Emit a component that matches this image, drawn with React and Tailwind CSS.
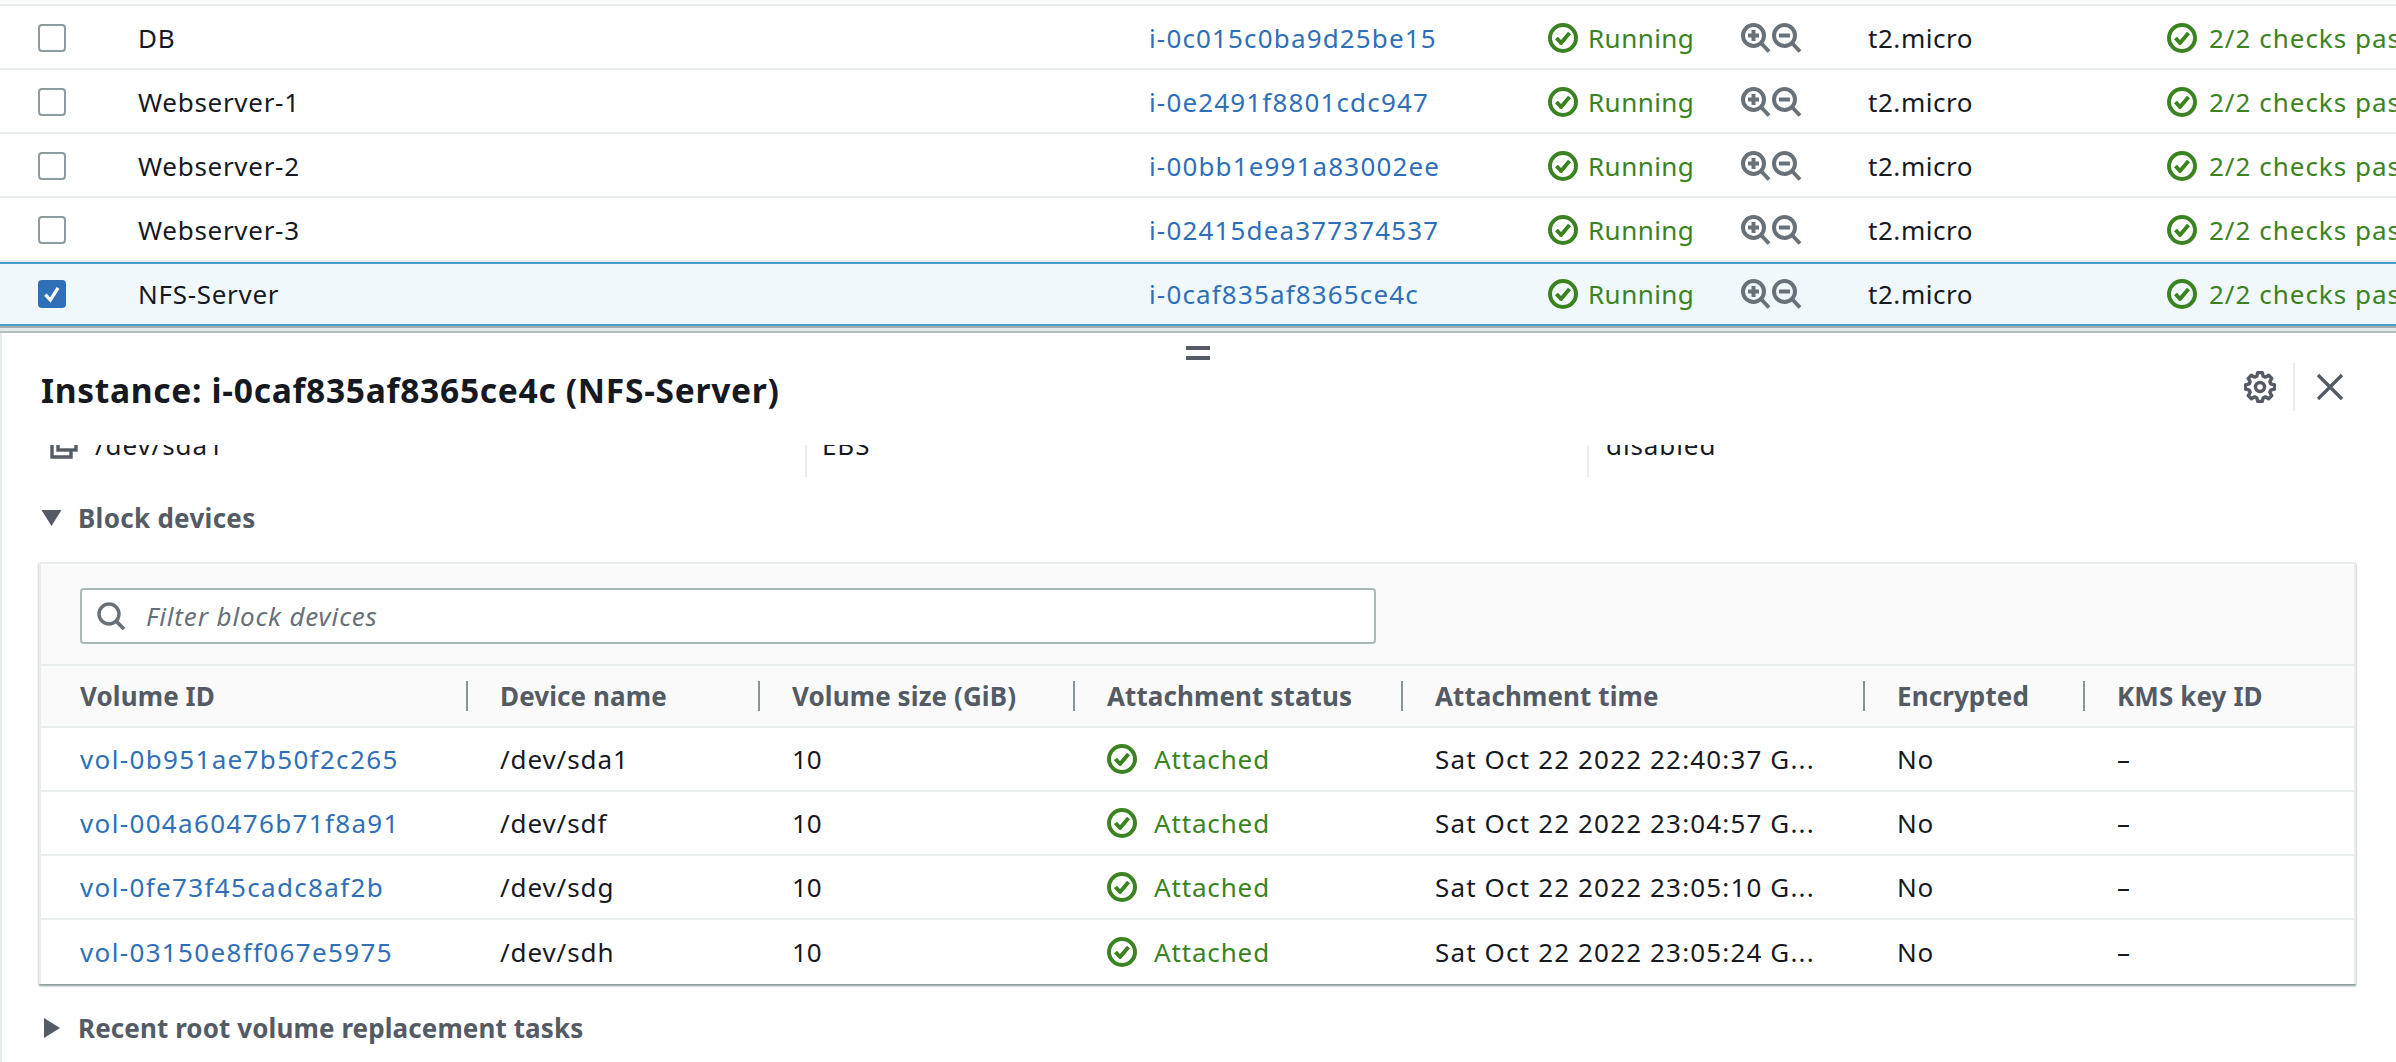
const font = { fontFamily: '"Noto Sans", sans-serif' };

const instances = [
  { name: "DB", id: "i-0c015c0ba9d25be15" },
  { name: "Webserver-1", id: "i-0e2491f8801cdc947" },
  { name: "Webserver-2", id: "i-00bb1e991a83002ee" },
  { name: "Webserver-3", id: "i-02415dea377374537" },
  { name: "NFS-Server", id: "i-0caf835af8365ce4c", selected: true },
];

const volumes = [
  { id: "vol-0b951ae7b50f2c265", device: "/dev/sda1", time: "Sat Oct 22 2022 22:40:37 G..." },
  { id: "vol-004a60476b71f8a91", device: "/dev/sdf", time: "Sat Oct 22 2022 23:04:57 G..." },
  { id: "vol-0fe73f45cadc8af2b", device: "/dev/sdg", time: "Sat Oct 22 2022 23:05:10 G..." },
  { id: "vol-03150e8ff067e5975", device: "/dev/sdh", time: "Sat Oct 22 2022 23:05:24 G..." },
];

const headers = [
  { label: "Volume ID", w: "w-[420px]" },
  { label: "Device name", w: "w-[292px]" },
  { label: "Volume size (GiB)", w: "w-[315px]" },
  { label: "Attachment status", w: "w-[328px]" },
  { label: "Attachment time", w: "w-[462px]" },
  { label: "Encrypted", w: "w-[220px]" },
  { label: "KMS key ID", w: "w-[190px]" },
];

// 8 toothed gear outline
function gearPath() {
  const pts = [];
  for (let i = 0; i < 8; i++) {
    const a = (i * Math.PI) / 4 - Math.PI / 2;
    const s = 0.2;
    pts.push([a - s * 1.45, 11.2], [a - s * 0.75, 14.6], [a + s * 0.75, 14.6], [a + s * 1.45, 11.2]);
  }
  return (
    pts
      .map(([a, r], i) => (i ? "L" : "M") + (16 + r * Math.cos(a)).toFixed(2) + " " + (16 + r * Math.sin(a)).toFixed(2))
      .join(" ") + "Z"
  );
}

function StatusIcon() {
  return (
    <svg viewBox="0 0 30 30" className="w-[30px] h-[30px] shrink-0" fill="none" stroke="#3b8321" strokeWidth="4">
      <circle cx="15" cy="15" r="13" />
      <path d="M8.5 15l4.500 5 8.500-10" strokeLinejoin="round" />
    </svg>
  );
}

function ZoomIcon({ plus }) {
  return (
    <svg viewBox="0 0 30 30" className="w-[30px] h-[30px]" fill="none" stroke="#687078" strokeWidth="4">
      <circle cx="12.5" cy="12.5" r="10.5" />
      <path d="M20 20l8 8.500" />
      <path d="M7 12.5h11" />
      {plus && <path d="M12.5 7v11" />}
    </svg>
  );
}

function InstanceRow({ row }) {
  return (
    <div
      className={
        "flex items-center h-[64px] whitespace-nowrap border-b-2 " +
        (row.selected ? "bg-[#f1f8fc] border-[#44a0c8] border-t-2" : "bg-white border-[#eaeded] pt-[2px]")
      }
    >
      <div className="w-[138px] pl-[38px] shrink-0">
        {row.selected ? (
          <div className="w-[28px] h-[28px] rounded-[4px] bg-[#2f6fb8] flex items-center justify-center">
            <svg viewBox="0 0 20 20" className="w-[22px] h-[22px]" fill="none" stroke="#fff" strokeWidth="3">
              <path d="M4 10.500l4.500 5L15.500 4.500" />
            </svg>
          </div>
        ) : (
          <div className="w-[28px] h-[28px] rounded-[4px] border-2 border-[#8f9b9f] bg-white" />
        )}
      </div>
      <div className="w-[1011px] shrink-0 text-[#16191f] tracking-[0.7px]">{row.name}</div>
      <div className="w-[399px] shrink-0 text-[#2f6fb8] tracking-[1.15px]">{row.id}</div>
      <div className="w-[193px] shrink-0 flex items-center gap-[10px] text-[#3b8321] tracking-[0.45px]">
        <StatusIcon />
        Running
      </div>
      <div className="w-[127px] shrink-0 flex items-center gap-[1px]">
        <ZoomIcon plus />
        <ZoomIcon />
      </div>
      <div className="w-[299px] shrink-0 text-[#16191f] tracking-[0.55px]">t2.micro</div>
      <div className="shrink-0 flex items-center gap-[12px] text-[#3b8321] tracking-[1px]">
        <StatusIcon />
        2/2 checks passed
      </div>
    </div>
  );
}

function VolumeRow({ row, last }) {
  return (
    <div className={"flex items-center h-[64px] whitespace-nowrap pl-[39px] " + (last ? "" : "border-b-2 border-[#eaeded]")}>
      <div className="w-[420px] shrink-0 text-[#2f6fb8] tracking-[1.35px]">{row.id}</div>
      <div className="w-[292px] shrink-0 text-[#16191f] tracking-[0.9px]">{row.device}</div>
      <div className="w-[315px] shrink-0 text-[#16191f]">10</div>
      <div className="w-[328px] shrink-0 flex items-center gap-[17px] text-[#3b8321] tracking-[0.85px]">
        <StatusIcon />
        Attached
      </div>
      <div className="w-[462px] shrink-0 text-[#16191f] tracking-[1.15px]">{row.time}</div>
      <div className="w-[220px] shrink-0 text-[#16191f] tracking-[0.8px]">No</div>
      <div className="text-[#16191f]">–</div>
    </div>
  );
}

export default function App() {
  return (
    <div style={font} className="w-[2396px] h-[1062px] overflow-hidden bg-white text-[26px]">
      {/* instances table */}
      <div className="h-[6px] bg-[#fafafa] border-b-2 border-[#eaeded]" />
      {instances.map((row) => (
        <InstanceRow key={row.id} row={row} />
      ))}
      <div className="h-[7px] bg-[#e4e8e8] border-t-2 border-b-2 border-t-[#a5adae] border-b-[#b5bcbc]" />

      {/* split panel */}
      <div className="border-l-2 border-[#eaeded] h-[729px]">
        <div className="flex justify-center h-[15px] pt-[13px] pr-[2px]">
          <div className="w-[24px] h-[14px] shrink-0 border-y-4 border-[#545b64]" />
        </div>
        <div className="flex items-center h-[97px] pb-[13px] pl-[39px] pr-[52px]">
          <h2 className="text-[33.6px] font-bold text-[#16191f] grow tracking-[0.68px]">
            Instance: i-0caf835af8365ce4c (NFS-Server)
          </h2>
          <div className="flex items-center mb-[7px]">
            <svg viewBox="0 0 32 32" className="w-[32px] h-[32px]" fill="none" stroke="#545b64" strokeWidth="3.4">
              <path d={gearPath()} strokeLinejoin="round" />
              <circle cx="16" cy="16" r="4.5" />
            </svg>
            <div className="w-[2px] h-[48px] bg-[#eaeded] ml-[17px] mr-[21px]" />
            <svg viewBox="0 0 28 28" className="w-[28px] h-[28px]" fill="none" stroke="#545b64" strokeWidth="3.4">
              <path d="M2 2l24 24M26 2L2 26" />
            </svg>
          </div>
        </div>

        {/* scrolled content, top row is cut off by the header */}
        <div className="h-[617px] overflow-hidden">
          <div className="flex items-center h-[40px] -mt-[20px] whitespace-nowrap text-[#16191f] tracking-[0.9px]">
            <div className="w-[93px] pl-[48px] shrink-0">
              <svg viewBox="0 0 28 28" className="w-[28px] h-[28px]" fill="none" stroke="#545b64" strokeWidth="3.4">
                <path d="M8 9H2v17h19v-6" />
                <rect x="8" y="2" width="18" height="17" />
              </svg>
            </div>
            <div className="w-[710px] shrink-0">/dev/sda1</div>
            <div className="w-[2px] h-[64px] bg-[#eaeded] shrink-0 mr-[15px]" />
            <div className="w-[765px] shrink-0">EBS</div>
            <div className="w-[2px] h-[64px] bg-[#eaeded] shrink-0 mr-[17px]" />
            <div>disabled</div>
          </div>

          <div className="flex items-center h-[52px] mt-[27px] pl-[39px] gap-[16px] font-bold text-[#545b64] tracking-[0.3px]">
            <svg viewBox="0 0 20 16" className="w-[21px] h-[16px]" fill="#545b64">
              <path d="M0 0h20L10 16z" />
            </svg>
            Block devices
          </div>

          <div className="ml-[37px] w-[2317px] mt-[18px] border-x-2 border-t-2 border-[#eaeded] shadow-[0_2px_2px_#879596]">
            <div className="bg-[#fafafa] border-b-2 border-[#eaeded] h-[102px] pt-[24px] pl-[39px]">
              <div className="w-[1296px] h-[56px] bg-white border-2 border-[#aab7b8] rounded-[4px] flex items-center pl-[15px] gap-[20px]">
                <svg viewBox="0 0 29 28" className="w-[29px] h-[28px]" fill="none" stroke="#687078" strokeWidth="3.4">
                  <circle cx="12" cy="12" r="10" />
                  <path d="M19 19l8 8" strokeWidth="3.8" />
                </svg>
                <span className="italic text-[#687078] tracking-[0.85px]">Filter block devices</span>
              </div>
            </div>
            <div className="flex items-center h-[62px] bg-[#fafafa] border-b-2 border-[#eaeded] pl-[39px] font-bold text-[#545b64] whitespace-nowrap tracking-[0.1px]">
              {headers.map((h, i) => (
                <div key={h.label} className={"shrink-0 h-[30px] flex items-center justify-between " + h.w}>
                  {h.label}
                  {i < 6 && <div className="w-[2px] h-[30px] bg-[#879596] mr-[32px]" />}
                </div>
              ))}
            </div>
            {volumes.map((v, i) => (
              <VolumeRow key={v.id} row={v} last={i === 3} />
            ))}
          </div>

          <div className="flex items-center h-[40px] mt-[24px] pl-[42px] gap-[18px] font-bold text-[#545b64] tracking-[0.1px]">
            <svg viewBox="0 0 16 20" className="w-[16px] h-[20px]" fill="#545b64">
              <path d="M0 0l16 10L0 20z" />
            </svg>
            Recent root volume replacement tasks
          </div>
        </div>
      </div>
    </div>
  );
}
